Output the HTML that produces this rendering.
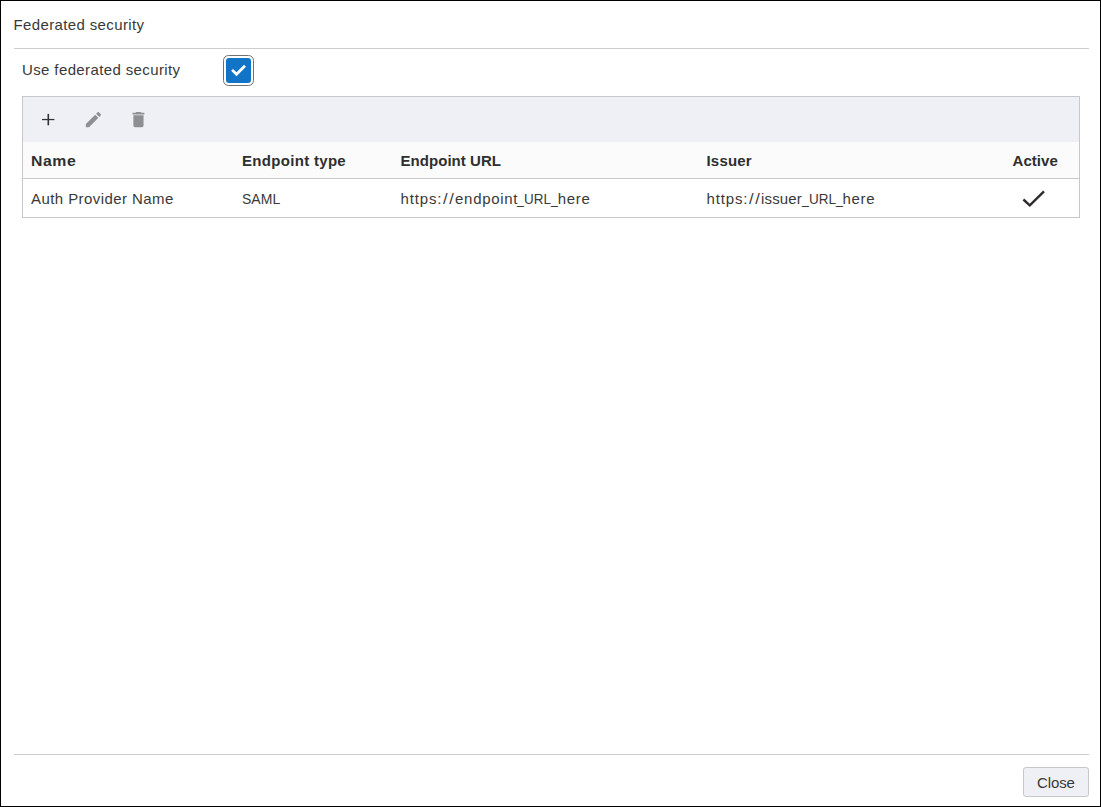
<!DOCTYPE html>
<html lang="en">
<head>
<meta charset="utf-8">
<title>Federated security</title>
<style>
html,body{margin:0;padding:0;}
body{width:1101px;height:807px;overflow:hidden;background:#fff;position:relative;
  font-family:"Liberation Sans",sans-serif;font-size:15px;color:#393939;}
.b{color:#2f2f2f;}
#frame{position:absolute;left:0;top:0;width:1099px;height:805px;border:1px solid #000;background:#fff;}
.t{position:absolute;white-space:nowrap;line-height:18px;height:18px;margin:0;font-size:15px;font-weight:normal;}
.t.b{font-weight:bold;}
.sg{display:inline-block;white-space:nowrap;transform-origin:left center;}
.hr{position:absolute;left:14px;width:1075px;height:1px;background:#cdcdd0;}
#grid{position:absolute;left:22px;top:96px;width:1056px;height:120px;border:1px solid #c8c8cc;background:#fff;}
#toolbar{position:absolute;left:0;top:0;width:1056px;height:45px;background:#eff0f6;}
#thead{position:absolute;left:0;top:45px;width:1056px;height:36px;background:#fbfbfb;border-bottom:1px solid #c8c8cc;}
#cbring{position:absolute;left:223px;top:55px;width:29px;height:29px;border:1px solid #707070;border-radius:5.5px;background:#fff;}
#cb{position:absolute;left:226px;top:58px;width:25px;height:25px;border-radius:3px;background:#1174c7;}
#btn{position:absolute;left:1023px;top:767px;width:66px;height:30px;box-sizing:border-box;margin:0;padding:0;font:inherit;color:inherit;text-align:left;border:1px solid #c6c6cc;border-radius:3px;background:#eff0f6;}
svg{position:absolute;overflow:visible;}
</style>
</head>
<body>
<div id="frame"></div>

<h1 class="t" id="t1" style="left:13.5px;top:16px;letter-spacing:0.37px">Federated security</h1>
<div class="hr" style="top:48px"></div>

<label class="t" id="t2" style="left:22px;top:61px;letter-spacing:0.38px">Use federated security</label>
<div id="cbring" role="checkbox" aria-checked="true" aria-label="Use federated security"></div>
<div id="cb"></div>
<svg style="left:226px;top:58px" width="25" height="25" viewBox="0 0 25 25"><path d="M6.1 11.9 L10.5 16.3 L19 7.8" fill="none" stroke="#fff" stroke-width="2.7"/></svg>

<div id="grid">
  <div id="toolbar"></div>
  <div id="thead"></div>
</div>

<!-- toolbar icons -->
<svg style="left:0;top:0" width="200" height="150" viewBox="0 0 200 150">
  <path d="M42 119.55 H54.4" fill="none" stroke="#333" stroke-width="1.25"/><path d="M48.3 113.9 V125.3" fill="none" stroke="#333" stroke-width="1.6"/>
  <g transform="translate(83.3 109.4) scale(0.847)" fill="#8e8e93">
    <path d="M3 17.25V21h3.750L17.810 9.940l-3.750-3.750L3 17.250zM20.710 7.040c.390-.390.390-1.020 0-1.410l-2.340-2.340c-.390-.390-1.020-.390-1.410 0l-1.830 1.830 3.750 3.750 1.830-1.830z"/>
  </g>
  <g transform="translate(128.3 109.4) scale(0.847)" fill="#8e8e93">
    <path d="M6 19c0 1.100.900 2 2 2h8c1.100 0 2-.900 2-2V7H6v12zM19 4h-3.500l-1-1h-5l-1 1H5v2h14V4z"/>
  </g>
</svg>

<div role="table" aria-label="Authentication providers">
<div role="row">
<div role="columnheader" class="t b" id="h1" style="left:31px;top:152px;letter-spacing:0.5px;transform:scaleX(1.055);transform-origin:left center">Name</div>
<div role="columnheader" class="t b" id="h2" style="left:242px;top:152px;letter-spacing:0.31px">Endpoint type</div>
<div role="columnheader" class="t b" id="h3" style="left:400.5px;top:152px;letter-spacing:0.05px">Endpoint URL</div>
<div role="columnheader" class="t b" id="h4" style="left:706.5px;top:152px;letter-spacing:0.2px">Issuer</div>
<div role="columnheader" class="t b" id="h5" style="left:1012.5px;top:152px;letter-spacing:0.06px">Active</div>
</div>
<div role="row">
<div role="cell" class="t" id="r1" style="left:31px;top:190px;letter-spacing:0.43px">Auth Provider Name</div>
<div role="cell" class="t" id="r2" style="left:242px;top:190px;letter-spacing:0px;transform:scaleX(0.935);transform-origin:left center">SAML</div>
<div role="cell" class="t" id="r3" style="left:400.5px;top:190px"><span class="sg" style="width:41.9px;letter-spacing:0.87px">https:</span><span class="sg" style="width:12.7px;letter-spacing:1.6px;transform:scaleX(1.1);margin-left:0.6px;margin-right:-0.6px">//</span><span class="sg" style="width:62.2px;letter-spacing:0.7px">endpoint</span><span class="sg" style="width:6.8px;transform:scaleX(0.815)">_</span><span class="sg" style="width:26.9px;transform:scaleX(0.897)">URL</span><span class="sg" style="width:6.8px;transform:scaleX(0.815)">_</span><span class="sg" style="width:32px;letter-spacing:0.68px">here</span></div>
<div role="cell" class="t" id="r4" style="left:706.5px;top:190px"><span class="sg" style="width:41.9px;letter-spacing:0.87px">https:</span><span class="sg" style="width:12.7px;letter-spacing:1.6px;transform:scaleX(1.1);margin-left:0.6px;margin-right:-0.6px">//</span><span class="sg" style="width:40.7px;letter-spacing:0.12px">issuer</span><span class="sg" style="width:6.9px;transform:scaleX(0.815)">_</span><span class="sg" style="width:27px;transform:scaleX(0.9)">URL</span><span class="sg" style="width:6.9px;transform:scaleX(0.815)">_</span><span class="sg" style="width:32px;letter-spacing:0.68px">here</span></div>
<svg style="left:1014px;top:183px" width="40" height="30" viewBox="1014 183 40 30"><path d="M1023.4 199.5 L1029.8 205.3 L1044 191.4" fill="none" stroke="#2e2b2a" stroke-width="2.4"/></svg>
</div>
</div>

<div class="hr" style="top:754px"></div>
<button id="btn" type="button"><span class="t" id="c1" style="left:13px;top:6px;letter-spacing:-0.12px">Close</span></button>
</body>
</html>
